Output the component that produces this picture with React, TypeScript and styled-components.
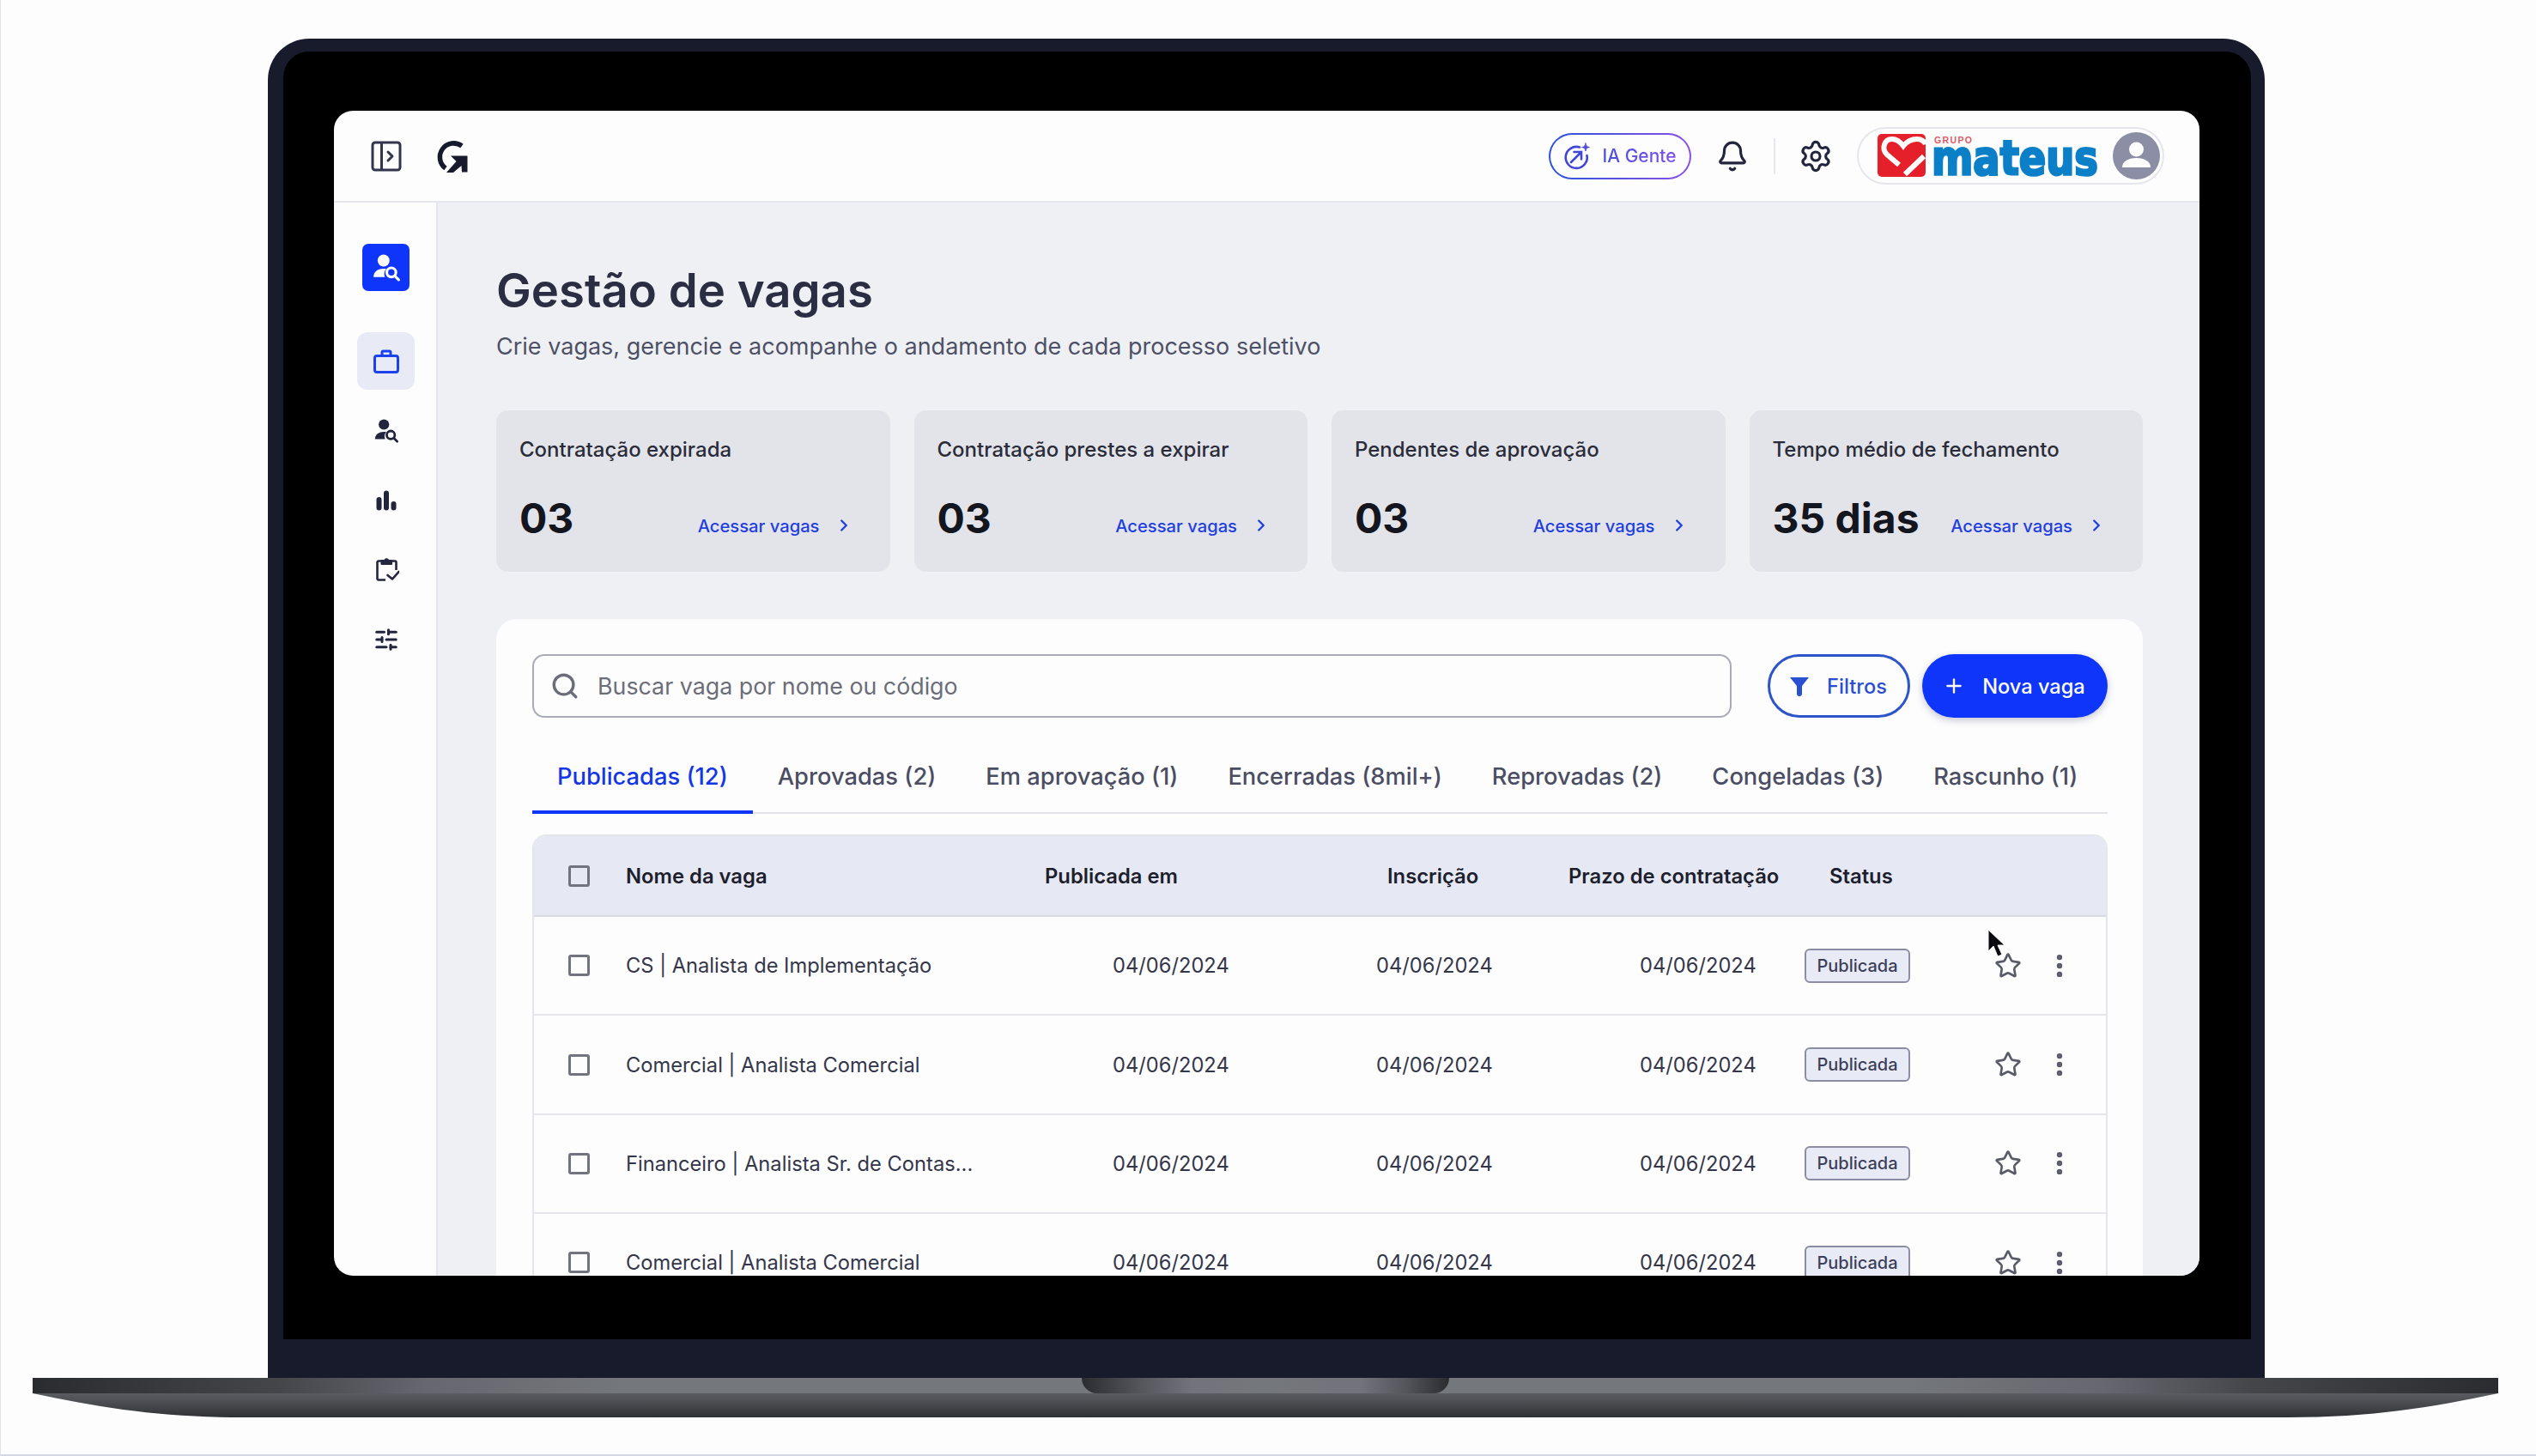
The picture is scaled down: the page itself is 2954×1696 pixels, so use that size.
import styled, { createGlobalStyle } from 'styled-components';
import { Bell, Settings, Search, Plus, Star, EllipsisVertical, ChevronRight, SlidersHorizontal } from 'lucide-react';

const GlobalStyle = createGlobalStyle`
  * { box-sizing: border-box; }
  html, body { margin: 0; padding: 0; background: #fdfdfe; }
  body { font-family: Inter, "Noto Sans", "Liberation Sans", sans-serif; }
`;

const Stage = styled.div`
  width: 2954px;
  height: 1696px;
  padding-top: 45px;
  overflow: hidden;
  border-left: 1px solid #e2e3ea;
  border-bottom: 2px solid #d6d7e4;
`;

const Lid = styled.div`
  width: 2326px;
  height: 1560px;
  margin-left: 311px;
  padding: 15px 16px 45px 18px;
  background: #171b2b;
  border-radius: 48px 48px 0 0;
`;

const Bezel = styled.div`
  height: 100%;
  padding: 69px 60px 74px 59px;
  background: #000;
  border-radius: 30px 30px 0 0;
`;

const Screen = styled.div`
  position: relative;
  height: 100%;
  display: flex;
  flex-direction: column;
  overflow: hidden;
  background: #fdfdfe;
  border-radius: 22px;
`;

const Base = styled.div`
  width: 2872px;
  margin-left: 37px;
`;

const BaseStrip = styled.div`
  height: 18px;
  display: flex;
  justify-content: center;
  background: linear-gradient(90deg, #2a2c30 0%, #44464a 10%, #66676f 16%, #74777b 24%, #74777b 76%, #66676f 84%, #44464a 90%, #2a2c30 100%);
`;

const Notch = styled.div`
  width: 428px;
  height: 18px;
  border-radius: 0 0 18px 18px;
  background: linear-gradient(90deg, #2b2c30 0%, #55565c 16%, #72737b 30%, #74777b 50%, #72737b 76%, #55565c 88%, #2b2c30 100%);
`;

const BaseLower = styled.div`
  height: 28px;
  background: linear-gradient(180deg, #5a5c61 0%, #44464a 55%, #2f3135 100%);
  clip-path: path('M0 0 C 80 17, 150 28, 245 28 L 2627 28 C 2722 28, 2792 17, 2872 0 Z');
`;

const TopBar = styled.header`
  flex: 0 0 107px;
  display: flex;
  align-items: center;
  padding: 0 41px 0 43px;
  border-bottom: 2px solid #e6e7ec;
`;

const PanelToggle = styled.svg`
  width: 36px;
  height: 36px;
  margin-right: 39px;
`;

const BrandMark = styled.svg`
  width: 38px;
  height: 40px;
`;

const TopActions = styled.div`
  margin-left: auto;
  display: flex;
  align-items: center;
`;

const AiButton = styled.div`
  width: 166px;
  height: 54px;
  display: flex;
  align-items: center;
  justify-content: center;
  gap: 13px;
  border: 2px solid transparent;
  border-radius: 27px;
  background: linear-gradient(#fdfdfe, #fdfdfe) padding-box, linear-gradient(90deg, #2c52dc, #8a50e8) border-box;
`;

const AiLabel = styled.span`
  font-size: 21px;
  font-weight: 500;
  color: transparent;
  background: linear-gradient(90deg, #4a4fdc, #7d50ea);
  -webkit-background-clip: text;
  background-clip: text;
`;

const BarIcon = styled.div<{ $gap: number }>`
  display: flex;
  color: #23253f;
  margin-left: ${({ $gap }) => $gap}px;
`;

const BarDivider = styled.div`
  width: 2px;
  height: 42px;
  margin-left: 29px;
  background: #e6e7ec;
`;

const BrandPill = styled.div`
  width: 358px;
  height: 67px;
  margin-left: 28px;
  padding: 0 3px 0 22px;
  display: flex;
  align-items: center;
  justify-content: space-between;
  border: 2px solid #e6e7ec;
  border-radius: 34px;
`;

const ClientLogo = styled.svg`
  width: 260px;
  height: 54px;
  overflow: visible;
`;

const Avatar = styled.svg`
  width: 55px;
  height: 55px;
`;

const Body = styled.div`
  flex: 1;
  min-height: 0;
  display: flex;
`;

const SideNav = styled.nav`
  flex: 0 0 121px;
  display: flex;
  flex-direction: column;
  align-items: center;
  padding: 48px 0 0 2px;
  border-right: 2px solid #e4e5ea;
`;

const AppTile = styled.div`
  width: 55px;
  height: 55px;
  display: flex;
  align-items: center;
  justify-content: center;
  margin-bottom: 48px;
  background: #0f35fa;
  border-radius: 7px;
`;

const NavItem = styled.div<{ $active?: boolean }>`
  width: 67px;
  height: ${({ $active }) => ($active ? '67px' : '81px')};
  margin-bottom: ${({ $active }) => ($active ? '7px' : '0')};
  display: flex;
  align-items: center;
  justify-content: center;
  color: ${({ $active }) => ($active ? '#1c42ee' : '#23253f')};
  background: ${({ $active }) => ($active ? '#e8ebf5' : 'transparent')};
  border-radius: 12px;
`;

const Main = styled.main`
  flex: 1;
  min-width: 0;
  padding: 68px 66px 0 68px;
  background: #eef0f4;
`;

const PageTitle = styled.h1`
  margin: 0;
  font-size: 54.5px;
  line-height: 68px;
  font-weight: 600;
  color: #2b2d42;
`;

const PageSubtitle = styled.p`
  margin: 14px 0 0;
  font-size: 27px;
  line-height: 36px;
  color: #4e5066;
`;

const CardGrid = styled.section`
  margin-top: 56px;
  display: grid;
  grid-template-columns: repeat(4, 1fr);
  gap: 28px;
`;

const StatCard = styled.article`
  height: 188px;
  padding: 30px 43px 0 27px;
  background: #e3e4e9;
  border-radius: 14px;
`;

const StatLabel = styled.div`
  font-size: 24px;
  line-height: 32px;
  font-weight: 500;
  color: #2a2c3a;
`;

const StatRow = styled.div`
  margin-top: 34px;
  display: flex;
  align-items: center;
  justify-content: space-between;
`;

const StatValue = styled.div`
  font-size: 48px;
  line-height: 60px;
  font-weight: 700;
  color: #14161f;
`;

const StatLink = styled.a`
  display: flex;
  align-items: center;
  gap: 17px;
  margin-top: 16px;
  font-size: 20.2px;
  font-weight: 500;
  color: #1f3fe0;
`;

const Panel = styled.section`
  margin-top: 55px;
  padding: 41px 41px 0 42px;
  height: 900px;
  background: #fdfdfe;
  border-radius: 24px;
`;

const Toolbar = styled.div`
  display: flex;
  align-items: stretch;
  height: 74px;
`;

const SearchBox = styled.div`
  flex: 1;
  display: flex;
  align-items: center;
  gap: 21px;
  padding: 0 19px;
  margin-right: 42px;
  background: #fdfdfe;
  border: 2px solid #a9abb6;
  border-radius: 14px;
  color: #6b6d78;
`;

const SearchHint = styled.span`
  font-size: 26.8px;
  color: #6b6d78;
`;

const PillButton = styled.button<{ $solid?: boolean }>`
  display: flex;
  align-items: center;
  justify-content: center;
  gap: 20px;
  width: ${({ $solid }) => ($solid ? '216px' : '166px')};
  margin-left: ${({ $solid }) => ($solid ? '14px' : '0')};
  padding: ${({ $solid }) => ($solid ? '0 2px 0 0' : '0 2px 0 0')};
  font: 500 23.6px Inter, sans-serif;
  color: ${({ $solid }) => ($solid ? '#fdfdfe' : '#2a4fd0')};
  background: ${({ $solid }) => ($solid ? '#0f35fa' : '#fdfdfe')};
  border: ${({ $solid }) => ($solid ? 'none' : '3px solid #2d55c9')};
  border-radius: 37px;
  box-shadow: ${({ $solid }) => ($solid ? '0 3px 8px rgba(30, 35, 80, 0.25)' : 'none')};
`;

const FunnelIcon = styled.svg`
  width: 24px;
  height: 24px;
`;

const TabRow = styled.div`
  margin-top: 40px;
  display: flex;
  border-bottom: 2px solid #e3e4ea;
`;

const Tab = styled.div<{ $active?: boolean }>`
  height: 72px;
  padding: 0 29px 12px;
  margin-bottom: -2px;
  display: flex;
  align-items: center;
  font-size: 27.3px;
  font-weight: 500;
  white-space: nowrap;
  color: ${({ $active }) => ($active ? '#1437e6' : '#4b4d63')};
  border-bottom: 4px solid ${({ $active }) => ($active ? '#0f35fa' : 'transparent')};
`;

const Table = styled.div`
  margin-top: 24px;
  border: 2px solid #e4e6ec;
  border-radius: 16px 16px 0 0;
`;

const HeadRow = styled.div`
  height: 94px;
  display: grid;
  grid-template-columns: 107px 488px 399px 211px 304px 1fr;
  align-items: center;
  background: #e6e9f3;
  border-bottom: 2px solid #d9dbe4;
  border-radius: 14px 14px 0 0;
`;

const HeadCell = styled.div`
  font-size: 23.8px;
  font-weight: 600;
  color: #1d1f2e;
  white-space: nowrap;
`;

const BodyRow = styled.div`
  height: 115.4px;
  display: grid;
  grid-template-columns: 107px 567px 307px 307px 192px 123px 1fr;
  align-items: center;
  border-bottom: 2px solid #e6e7ec;
`;

const CheckCell = styled.div`
  display: flex;
  justify-content: center;
  padding-right: 2px;
`;

const CheckBox = styled.div`
  width: 25px;
  height: 25px;
  border: 3px solid #71737e;
  border-radius: 3px;
`;

const TextCell = styled.div`
  font-size: 23.7px;
  color: #34364a;
  white-space: nowrap;
`;

const StatusBadge = styled.div`
  height: 40px;
  display: flex;
  align-items: center;
  justify-content: center;
  font-size: 20px;
  font-weight: 500;
  color: #3c3e5a;
  background: #e8ebf5;
  border: 2px solid #8b8da3;
  border-radius: 6px;
`;

const RowActions = styled.div`
  display: flex;
  align-items: center;
  gap: 27px;
  padding-left: 98px;
  color: #5a5b68;
`;

const Pointer = styled.svg`
  position: absolute;
  left: 1926px;
  top: 953px;
  width: 22px;
  height: 34px;
`;

const UserSearchIcon = ({ size, color, lens }: { size: number; color: string; lens: string }) => (
  <svg width={size} height={size} viewBox="0 0 32 32">
    <circle cx="13" cy="8" r="6.5" fill={color} />
    <path d="M2 26c0-5 4-9 11-9h3c-2 2-3 6-1.5 9z" fill={color} />
    <circle cx="21.5" cy="21" r="5" fill={lens} stroke={color} strokeWidth="3" />
    <path d="M25.5 25l4 4" stroke={color} strokeWidth="3" strokeLinecap="round" />
  </svg>
);

const BriefcaseIcon = () => (
  <svg width="30" height="28" viewBox="0 0 30 28" fill="none" stroke="currentColor" strokeWidth="3">
    <rect x="1.5" y="7.5" width="27" height="19" rx="2.5" />
    <path d="M10 7V3.5A1.5 1.5 0 0 1 11.5 2h7A1.5 1.5 0 0 1 20 3.5V7" />
  </svg>
);

const BarsIcon = () => (
  <svg width="24" height="24" viewBox="0 0 24 24" fill="currentColor">
    <rect x="0.5" y="8" width="6" height="15.5" rx="3" />
    <rect x="9" y="0.5" width="6" height="23" rx="3" />
    <rect x="17.5" y="13" width="6" height="10.5" rx="3" />
  </svg>
);

const ClipboardIcon = () => (
  <svg width="30" height="30" viewBox="-3 0 30 30" fill="none" stroke="currentColor" strokeWidth="2.6">
    <path d="M11 26.500H3A1.500 1.500 0 0 1 1.500 25V6A1.500 1.500 0 0 1 3 4.500H6M18 4.500H22A1.500 1.500 0 0 1 23.500 6V15" />
    <path d="M6 3.500H9.500A3 3 0 0 1 15 3.500H18.500V8.500H6z" fill="currentColor" strokeWidth="1" />
    <path d="M13.500 21L19 25.500L26.500 17" strokeLinecap="round" strokeLinejoin="round" />
  </svg>
);

const AiIcon = () => (
  <svg width="32" height="32" viewBox="0 0 32 32" fill="none" stroke="#4146d4" strokeWidth="2.6" strokeLinecap="round">
    <path d="M19 5.5A12.5 12.5 0 1 0 27.5 15" />
    <path d="M9 23L21 11M12.5 11H21v8.5" />
    <path d="M26 1c.5 3 1.5 4 4.5 4.5-3 .5-4 1.5-4.5 4.5-.5-3-1.500-4-4.500-4.500 3-.5 4-1.500 4.500-4.500z" fill="#5a46dc" strokeWidth="0.8" />
  </svg>
);

const stats = [
  { label: 'Contratação expirada', value: '03' },
  { label: 'Contratação prestes a expirar', value: '03' },
  { label: 'Pendentes de aprovação', value: '03' },
  { label: 'Tempo médio de fechamento', value: '35 dias' },
];

const tabs = [
  'Publicadas (12)',
  'Aprovadas (2)',
  'Em aprovação (1)',
  'Encerradas (8mil+)',
  'Reprovadas (2)',
  'Congeladas (3)',
  'Rascunho (1)',
];

const jobs = [
  'CS | Analista de Implementação',
  'Comercial | Analista Comercial',
  'Financeiro | Analista Sr. de Contas...',
  'Comercial | Analista Comercial',
];

export default function App() {
  return (
    <Stage>
      <GlobalStyle />
      <Lid>
        <Bezel>
          <Screen>
            <TopBar>
              <PanelToggle viewBox="0 0 36 36" fill="none" stroke="#33354d" strokeWidth="3">
                <rect x="2" y="2" width="32" height="32" rx="3" />
                <path d="M12.500 2v32" />
                <path d="M20 13l5 5-5 5" strokeLinecap="round" strokeLinejoin="round" />
              </PanelToggle>
              <BrandMark viewBox="0 0 38 40">
                <path d="M31 8A16 16 0 1 0 12 34" fill="none" stroke="#161a2c" strokeWidth="5.500" />
                <path d="M18 19.500H37.500V38.500H31L30.500 31 21 39H13L24.500 26z" fill="#161a2c" />
              </BrandMark>
              <TopActions>
                <AiButton>
                  <AiIcon />
                  <AiLabel>IA Gente</AiLabel>
                </AiButton>
                <BarIcon $gap={29}>
                  <Bell size={38} strokeWidth={2} />
                </BarIcon>
                <BarDivider />
                <BarIcon $gap={27}>
                  <Settings size={40} strokeWidth={1.9} />
                </BarIcon>
                <BrandPill>
                  <ClientLogo viewBox="0 0 260 54">
                    <rect x="0" y="1" width="56" height="50" rx="5" fill="#e6202a" />
                    <path d="M25 37L11 25C4 18 8 7 17 7C23 7 27 11 30 15C34 10 40 7 46 7C51 7 55 10 56 13" fill="none" stroke="#fdfdfe" strokeWidth="6" />
                    <path d="M54 27L32 48" fill="none" stroke="#fdfdfe" strokeWidth="6" />
                    <text x="66" y="12" fontFamily="'Liberation Sans', sans-serif" fontSize="10.5" fontWeight="700" fill="#e05a64" textLength="44">GRUPO</text>
                    <text x="63" y="48" fontFamily="'DejaVu Sans', sans-serif" fontSize="56" fontWeight="700" fill="#0b7fc7" stroke="#0b7fc7" strokeWidth="2.800" textLength="194" lengthAdjust="spacingAndGlyphs">mateus</text>
                  </ClientLogo>
                  <Avatar viewBox="0 0 55 55">
                    <circle cx="27.500" cy="27.500" r="27.500" fill="#8c8ea6" />
                    <circle cx="27.500" cy="20" r="8.500" fill="#fdfdfe" />
                    <path d="M11 41c0-7 7-11 16.500-11S44 34 44 41z" fill="#fdfdfe" />
                  </Avatar>
                </BrandPill>
              </TopActions>
            </TopBar>
            <Body>
              <SideNav>
                <AppTile>
                  <UserSearchIcon size={34} color="#fdfdfe" lens="#0f35fa" />
                </AppTile>
                <NavItem $active>
                  <BriefcaseIcon />
                </NavItem>
                <NavItem>
                  <UserSearchIcon size={30} color="#23253f" lens="#fdfdfe" />
                </NavItem>
                <NavItem>
                  <BarsIcon />
                </NavItem>
                <NavItem>
                  <ClipboardIcon />
                </NavItem>
                <NavItem>
                  <SlidersHorizontal size={30} strokeWidth={2.4} />
                </NavItem>
              </SideNav>
              <Main>
                <PageTitle>Gestão de vagas</PageTitle>
                <PageSubtitle>Crie vagas, gerencie e acompanhe o andamento de cada processo seletivo</PageSubtitle>
                <CardGrid>
                  {stats.map((stat) => (
                    <StatCard key={stat.label}>
                      <StatLabel>{stat.label}</StatLabel>
                      <StatRow>
                        <StatValue>{stat.value}</StatValue>
                        <StatLink>
                          Acessar vagas
                          <ChevronRight size={22} strokeWidth={2.6} />
                        </StatLink>
                      </StatRow>
                    </StatCard>
                  ))}
                </CardGrid>
                <Panel>
                  <Toolbar>
                    <SearchBox>
                      <Search size={34} strokeWidth={2.4} />
                      <SearchHint>Buscar vaga por nome ou código</SearchHint>
                    </SearchBox>
                    <PillButton>
                      <FunnelIcon viewBox="0 0 24 24">
                        <path d="M1 2h22l-8 10v9a2.500 2.500 0 0 1-6 0v-9z" fill="#2a4fd0" />
                      </FunnelIcon>
                      Filtros
                    </PillButton>
                    <PillButton $solid>
                      <Plus size={26} strokeWidth={2.2} />
                      Nova vaga
                    </PillButton>
                  </Toolbar>
                  <TabRow>
                    {tabs.map((tab, i) => (
                      <Tab key={tab} $active={i === 0}>{tab}</Tab>
                    ))}
                  </TabRow>
                  <Table>
                    <HeadRow>
                      <CheckCell><CheckBox /></CheckCell>
                      <HeadCell>Nome da vaga</HeadCell>
                      <HeadCell>Publicada em</HeadCell>
                      <HeadCell>Inscrição</HeadCell>
                      <HeadCell>Prazo de contratação</HeadCell>
                      <HeadCell>Status</HeadCell>
                    </HeadRow>
                    {jobs.map((job, i) => (
                      <BodyRow key={i}>
                        <CheckCell><CheckBox /></CheckCell>
                        <TextCell>{job}</TextCell>
                        <TextCell>04/06/2024</TextCell>
                        <TextCell>04/06/2024</TextCell>
                        <TextCell>04/06/2024</TextCell>
                        <StatusBadge>Publicada</StatusBadge>
                        <RowActions>
                          <Star size={32} strokeWidth={2} />
                          <EllipsisVertical size={34} strokeWidth={2.5} />
                        </RowActions>
                      </BodyRow>
                    ))}
                  </Table>
                </Panel>
              </Main>
            </Body>
            <Pointer viewBox="0 0 22 34">
              <path d="M1 1v25l6-6 5 12 5-2-5-11h8z" fill="#0a0a0f" stroke="#fdfdfe" strokeWidth="1" />
            </Pointer>
          </Screen>
        </Bezel>
      </Lid>
      <Base>
        <BaseStrip>
          <Notch />
        </BaseStrip>
        <BaseLower />
      </Base>
    </Stage>
  );
}
